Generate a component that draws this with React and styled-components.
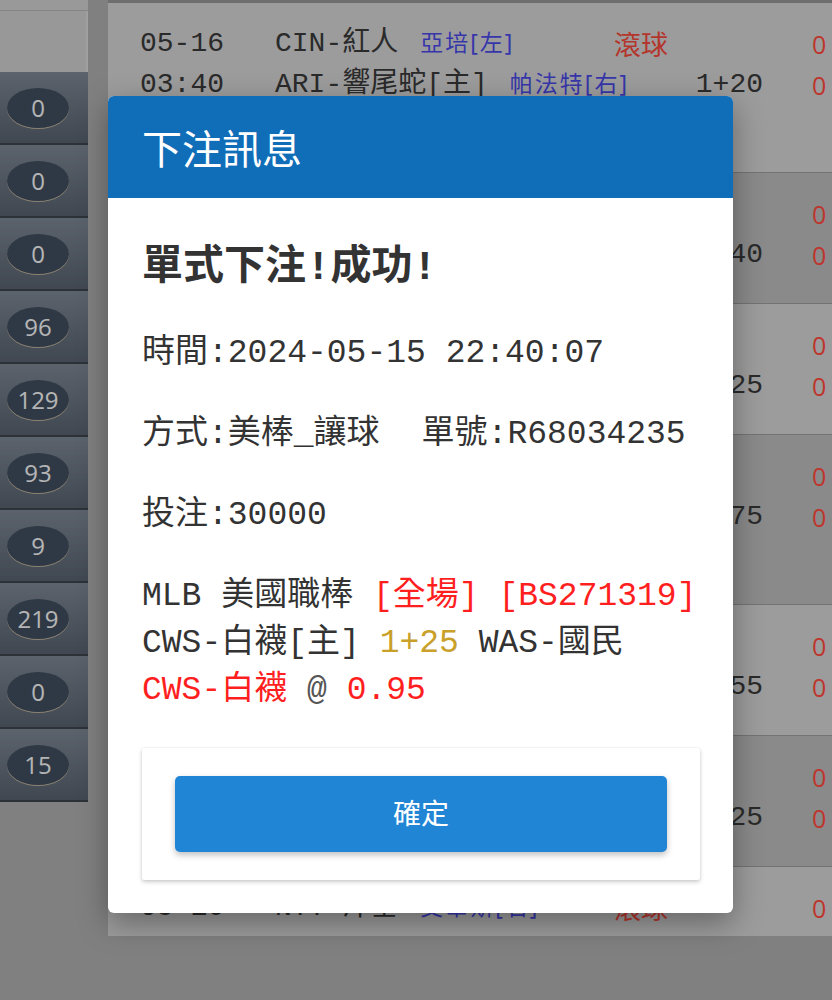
import React from 'react';
import styled, { createGlobalStyle } from 'styled-components';

const MONO = `'Liberation Mono', 'Noto Sans CJK TC', monospace`;
const SANS = `'Noto Sans', 'Noto Sans CJK TC', sans-serif`;
const ROUND = `'Open Sans', 'Noto Sans CJK TC', sans-serif`;

const GlobalStyle = createGlobalStyle`
  html, body { margin: 0; padding: 0; }
  body { font-family: ${SANS}; background: #ababab; }
  *, *::before, *::after { box-sizing: border-box; }
`;

const Page = styled.div`
  position: relative;
  width: 100%;
  height: 1000px;
  overflow: hidden;
  display: flex;
  align-items: flex-start;
  gap: 20px;
  background: #ababab;
`;

/* ---------- sidebar ---------- */
const Sidebar = styled.nav`
  width: 88px;
  flex: none;
  display: flex;
  flex-direction: column;
`;

const SideHead = styled.div`
  height: 72px;
  background: #cbcbcb;
  border-top: 10px solid #cdcdcd;
  box-shadow: inset 0 1px 0 #b2b2b2, inset -2px 0 0 #d6d6d6;
`;

const NavRow = styled.div`
  height: 73px;
  display: flex;
  align-items: center;
  padding-left: 7px;
  background: linear-gradient(#7a8491, #56606d);
  border-bottom: 2px solid #3c434b;
`;

const Badge = styled.span`
  width: 62px;
  height: 40px;
  border-radius: 31px / 20px;
  background: #3f4c5d;
  box-shadow: 0 1px 0 #b9ad97;
  color: #f2f2f2;
  font: 400 24px/40px ${ROUND};
  text-align: center;
`;

/* ---------- table ---------- */
const Table = styled.div`
  flex: 1;
  height: 936px;
  overflow: hidden;
  border-top: 3px solid #939393;
`;

const Row = styled.div`
  height: ${(p) => (p.$tall ? 170 : 131)}px;
  padding: 20px 0 0 32px;
  background: ${(p) => (p.$dark ? '#b8b8b8' : '#d0d0d0')};
  border-bottom: 1px solid #9a9a9a;
`;

const Line = styled.div`
  height: 41px;
  display: grid;
  grid-template-columns: 135px 339px 66px 83px 1fr;
  align-items: center;
  font: 400 28px/41px ${MONO};
  color: #383838;
  white-space: nowrap;
`;

const Team = styled.span`
  min-width: 0;
`;

const Pitcher = styled.span`
  margin-left: 22px;
  font: 400 23px ${SANS};
  color: #4949e3;
  letter-spacing: 2px;
`;

const Status = styled.span`
  font: 400 27px ${SANS};
  color: #f0473b;
`;

const Handicap = styled.span`
  text-align: right;
`;

const Value = styled.span`
  padding-left: 49px;
  font: 400 25px ${ROUND};
  color: #fd493c;
`;

/* ---------- dialog ---------- */
const Backdrop = styled.div`
  position: absolute;
  inset: 0;
  background: rgba(0, 0, 0, 0.25);
  display: flex;
  align-items: flex-start;
  padding: 96px 0 0 108px;
`;

const Dialog = styled.section`
  width: 625px;
  background: #fff;
  border-radius: 6px;
  overflow: hidden;
  box-shadow: 0 10px 30px rgba(0, 0, 0, 0.35);
`;

const DialogHeader = styled.header`
  height: 102px;
  display: flex;
  align-items: center;
  padding-left: 34px;
  background: #106eb8;
  color: #fff;
  font: 400 40px ${SANS};
`;

const DialogBody = styled.div`
  display: flex;
  flex-direction: column;
  gap: 34px;
  padding: 42px 33px 33px 34px;
`;

const Title = styled.h2`
  margin: 0;
  font: 700 41px/56px ${MONO};
  color: #333;
`;

const Info = styled.div`
  font: 400 33px/47px ${MONO};
  color: #333;
  white-space: nowrap;
`;

const Spaced = styled.span`
  margin-left: 42px;
`;

const Tone = styled.span`
  color: ${(p) => p.$c};
`;

const ButtonCard = styled.div`
  padding: 28px 33px;
  background: #fff;
  border-radius: 2px;
  box-shadow: 0 2px 4px rgba(0, 0, 0, 0.2), 0 0 2px rgba(0, 0, 0, 0.08);
`;

const ConfirmButton = styled.button`
  display: block;
  width: 100%;
  height: 76px;
  padding: 0 0 5px;
  border: none;
  border-radius: 5px;
  background: #2185d6;
  color: #fff;
  font: 400 28px ${SANS};
  box-shadow: 0 3px 6px rgba(0, 0, 0, 0.25);
  cursor: pointer;
`;

const RED = '#ff1f1f';
const GOLD = '#c9a02a';
const GREY = '#555';

const badges = [0, 0, 0, 96, 129, 93, 9, 219, 0, 15];

const rows = [
  {
    tall: true,
    lines: [
      { date: '05-16', team: 'CIN-紅人', pitcher: '亞培[左]', status: '滾球', hcp: '', val: '0' },
      { date: '03:40', team: 'ARI-響尾蛇[主]', pitcher: '帕法特[右]', status: '', hcp: '1+20', val: '0' },
    ],
  },
  {
    dark: true,
    lines: [
      { date: '05-16', team: 'TEX-遊騎兵', pitcher: '鄧寧[右]', status: '滾球', hcp: '', val: '0' },
      { date: '06:40', team: 'SEA-水手[主]', pitcher: '米勒[右]', status: '', hcp: '1+40', val: '0' },
    ],
  },
  {
    lines: [
      { date: '05-16', team: 'PHI-費城人', pitcher: '惠勒[右]', status: '滾球', hcp: '', val: '0' },
      { date: '06:45', team: 'MIA-馬林魚[主]', pitcher: '魏斯[右]', status: '', hcp: '1+25', val: '0' },
    ],
  },
  {
    tall: true,
    dark: true,
    lines: [
      { date: '05-16', team: 'NYM-大都會', pitcher: '曼納亞[右]', status: '滾球', hcp: '', val: '0' },
      { date: '07:05', team: 'ATL-勇士[主]', pitcher: '摩頓[右]', status: '', hcp: '1+75', val: '0' },
    ],
  },
  {
    lines: [
      { date: '05-16', team: 'DET-老虎', pitcher: '史庫柏[左]', status: '滾球', hcp: '', val: '0' },
      { date: '07:10', team: 'KC-皇家[主]', pitcher: '羅傑斯[左]', status: '', hcp: '1+55', val: '0' },
    ],
  },
  {
    dark: true,
    lines: [
      { date: '05-16', team: 'CHC-小熊', pitcher: '今永[左]', status: '滾球', hcp: '', val: '0' },
      { date: '07:40', team: 'MIL-釀酒人[主]', pitcher: '派瑞特[右]', status: '', hcp: '1+25', val: '0' },
    ],
  },
  {
    lines: [
      { date: '05-16', team: 'NYY-洋基', pitcher: '艾華斯[右]', status: '滾球', hcp: '', val: '0' },
    ],
  },
];

export default function App() {
  return (
    <>
      <GlobalStyle />
      <Page>
        <Sidebar>
          <SideHead />
          {badges.map((b, i) => (
            <NavRow key={i}>
              <Badge>{b}</Badge>
            </NavRow>
          ))}
        </Sidebar>

        <Table>
          {rows.map((r, i) => (
            <Row key={i} $tall={r.tall} $dark={r.dark}>
              {r.lines.map((l, j) => (
                <Line key={j}>
                  <span>{l.date}</span>
                  <Team>
                    {l.team}
                    <Pitcher>{l.pitcher}</Pitcher>
                  </Team>
                  <Status>{l.status}</Status>
                  <Handicap>{l.hcp}</Handicap>
                  <Value>{l.val}</Value>
                </Line>
              ))}
            </Row>
          ))}
        </Table>

        <Backdrop>
          <Dialog role="dialog" aria-label="下注訊息">
            <DialogHeader>下注訊息</DialogHeader>
            <DialogBody>
              <Title>單式下注!成功!</Title>
              <Info>時間:2024-05-15 22:40:07</Info>
              <Info>
                方式:美棒_讓球<Spaced>單號:R68034235</Spaced>
              </Info>
              <Info>投注:30000</Info>
              <Info>
                <div>
                  MLB 美國職棒 <Tone $c={RED}>[全場] [BS271319]</Tone>
                </div>
                <div>
                  CWS-白襪[主] <Tone $c={GOLD}>1+25</Tone> WAS-國民
                </div>
                <div>
                  <Tone $c={RED}>CWS-白襪</Tone> <Tone $c={GREY}>@</Tone>{' '}
                  <Tone $c={RED}>0.95</Tone>
                </div>
              </Info>
              <ButtonCard>
                <ConfirmButton type="button">確定</ConfirmButton>
              </ButtonCard>
            </DialogBody>
          </Dialog>
        </Backdrop>
      </Page>
    </>
  );
}
